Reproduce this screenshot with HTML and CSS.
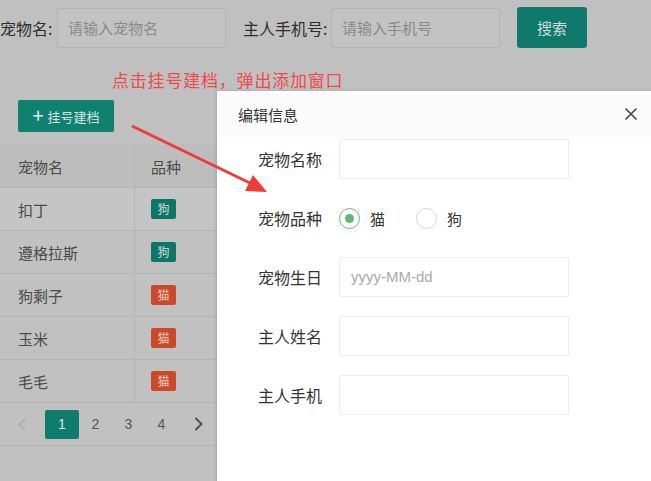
FILE: index.html
```html
<!DOCTYPE html>
<html lang="zh">
<head>
<meta charset="utf-8">
<link rel="stylesheet" href="styles.css">
</head>
<body>
<div class="page">
  <div class="search">
    <span class="lbl lbl-name">宠物名:</span>
    <div class="inp">请输入宠物名</div>
    <span class="lbl lbl-phone">主人手机号:</span>
    <div class="inp">请输入手机号</div>
    <button class="btn-search">搜索</button>
  </div>
  <div class="note">点击挂号建档，弹出添加窗口</div>
  <div class="toolbar"><button class="btn-add"><span class="plus">+</span>挂号建档</button></div>
  <div class="table">
    <div class="tr th"><div class="c1">宠物名</div><div class="c2">品种</div></div>
    <div class="tr hl"><div class="c1">扣丁</div><div class="c2"><span class="tag dog">狗</span></div></div>
    <div class="tr"><div class="c1">遵格拉斯</div><div class="c2"><span class="tag dog">狗</span></div></div>
    <div class="tr"><div class="c1">狗剩子</div><div class="c2"><span class="tag cat">猫</span></div></div>
    <div class="tr"><div class="c1">玉米</div><div class="c2"><span class="tag cat">猫</span></div></div>
    <div class="tr"><div class="c1">毛毛</div><div class="c2"><span class="tag cat">猫</span></div></div>
  </div>
  <div class="pager">
    <span class="pg prev"><svg width="8" height="13" viewBox="0 0 8 13"><path d="M7 1 L1.5 6.5 L7 12" stroke="#a9a9a9" stroke-width="1.4" fill="none"/></svg></span>
    <span class="pg cur">1</span>
    <span class="pg">2</span>
    <span class="pg">3</span>
    <span class="pg">4</span>
    <span class="pg next"><svg width="9" height="14" viewBox="0 0 9 14"><path d="M1.5 1 L7.5 7 L1.5 13" stroke="#4a4a4a" stroke-width="1.8" fill="none"/></svg></span>
  </div>
</div>

<div class="dialog">
  <div class="dlg-head">
    <span class="dlg-title">编辑信息</span>
    <svg class="close" width="14" height="14" viewBox="0 0 14 14"><path d="M1.5 1.5 L12.5 12.5 M12.5 1.5 L1.5 12.5" stroke="#444" stroke-width="1.6" fill="none"/></svg>
  </div>
  <div class="form">
    <div class="row"><span class="flbl">宠物名称</span><div class="finp"></div></div>
    <div class="row">
      <span class="flbl">宠物品种</span>
      <span class="radio on"></span><span class="rtxt">猫</span>
      <span class="radio"></span><span class="rtxt">狗</span>
    </div>
    <div class="row"><span class="flbl">宠物生日</span><div class="finp ph">yyyy-MM-dd</div></div>
    <div class="row"><span class="flbl">主人姓名</span><div class="finp"></div></div>
    <div class="row"><span class="flbl">主人手机</span><div class="finp"></div></div>
  </div>
</div>

<svg class="arrow" width="651" height="481" viewBox="0 0 651 481">
  <line x1="132" y1="126" x2="252" y2="184" stroke="#ef3b3b" stroke-width="3"/>
  <polygon points="267,192 245,191 253,175" fill="#ef3b3b"/>
</svg>
</body>
</html>
```
FILE: styles.css
```css
* { box-sizing: border-box; }
html, body {
  margin: 0;
  padding: 0;
  width: 651px;
  height: 481px;
  overflow: hidden;
  background: #bfbfbf;
  font-family: "Noto Sans CJK SC", "Noto Sans", sans-serif;
}
.page {
  width: 651px;
  height: 481px;
  background: #c0c0c0;
}
.search {
  display: flex;
  align-items: center;
  padding-top: 8px;
  height: 48px;
}
.lbl {
  font-size: 16px;
  color: #2e2e2e;
  white-space: nowrap;
}
.lbl-name { width: 57px; padding-left: 0; }
.lbl-phone { width: 88px; margin-left: 17px; }
.inp {
  width: 169px;
  height: 40px;
  border: 1px solid #b4b4b4;
  background: #c3c3c3;
  border-radius: 2px;
  font-size: 15px;
  color: #8a8a8a;
  line-height: 38px;
  padding-left: 10px;
}
.btn-search {
  margin-left: 17px;
  width: 70px;
  height: 41px;
  border: none;
  border-radius: 3px;
  background: #0f7a6c;
  color: #c9dcd8;
  font-family: inherit;
  font-size: 15px;
  margin-top: -1px;
}
.note {
  height: 52px;
  padding-top: 20px;
  padding-left: 112px;
  font-size: 17px;
  line-height: 24px;
  color: #ef4a4a;
  letter-spacing: 0.8px;
}
.toolbar {
  height: 45px;
  padding-left: 18px;
}
.btn-add {
  width: 96px;
  height: 32px;
  border: none;
  border-radius: 2px;
  background: #10806f;
  color: #d6e6e2;
  font-family: inherit;
  font-size: 13px;
  padding: 0;
  display: flex;
  align-items: center;
  justify-content: center;
}
.plus {
  font-size: 20px;
  line-height: 20px;
  margin-right: 4px;
  margin-top: -2px;
  color: #e4efec;
}
.table {
  width: 100%;
}
.tr {
  display: flex;
  height: 43px;
  border-bottom: 1px solid #b5b5b5;
  font-size: 15px;
  color: #4a4a4a;
  background: #c1c1c1;
}
.tr.th { background: #bdbdbd; }
.tr.hl { background: #c5c5c5; }
.c1 {
  width: 135px;
  padding-left: 18px;
  display: flex;
  align-items: center;
  border-right: 1px solid #b5b5b5;
}
.c2 {
  flex: 1;
  padding-left: 16px;
  display: flex;
  align-items: center;
}
.tag {
  display: inline-block;
  width: 25px;
  height: 20px;
  line-height: 20px;
  text-align: center;
  font-size: 12px;
  color: #cfded9;
  border-radius: 2px;
}
.tag.dog { background: #0d7767; }
.tag.cat { background: #c9492a; color: #f0c9bd; }
.pager {
  display: flex;
  align-items: center;
  height: 43px;
  padding-left: 7px;
  border-bottom: 1px solid #b5b5b5;
  background: #c1c1c1;
}
.pg {
  width: 33px;
  text-align: center;
  font-family: "Liberation Sans", sans-serif;
  font-size: 14px;
  color: #555;
}
.pg svg { display: block; margin: 0 auto; }
.pg.prev { width: 30px; margin-right: 8px; }
.pg.cur {
  width: 34px;
  height: 29px;
  line-height: 29px;
  background: #0f7d6d;
  color: #d8e8e4;
  border-radius: 2px;
}
.pg.next { width: 40px; }

.dialog {
  position: absolute;
  left: 217px;
  top: 91px;
  width: 440px;
  height: 400px;
  background: #fff;
  box-shadow: -1px 0 3px rgba(0,0,0,0.15);
}
.dlg-head {
  height: 46px;
  display: flex;
  align-items: center;
  justify-content: space-between;
  padding-left: 21px;
  padding-right: 19px;
  background: #fbfbfb;
}
.dlg-title {
  font-size: 15px;
  color: #333;
}
.close { margin-top: -1px; }
.form {
  padding-top: 2px;
  padding-left: 41px;
  display: flex;
  flex-direction: column;
  gap: 19px;
}
.row {
  display: flex;
  align-items: center;
  height: 40px;
}
.flbl {
  width: 81px;
  font-size: 16px;
  color: #333;
}
.finp {
  width: 230px;
  height: 40px;
  border: 1px solid #ececec;
  border-radius: 2px;
  font-family: "Liberation Sans", sans-serif;
  font-size: 15px;
  line-height: 38px;
  padding-left: 11px;
  color: #aaa;
}
.radio {
  width: 21px;
  height: 21px;
  border-radius: 50%;
  border: 1px solid #d4d4d4;
  margin-left: 0;
  position: relative;
}
.radio.on {
  border: 1.5px solid #5fb878;
}
.radio.on::after {
  content: "";
  position: absolute;
  left: 50%;
  top: 50%;
  width: 9px;
  height: 9px;
  margin: -4.5px 0 0 -4.5px;
  border-radius: 50%;
  background: #5fb878;
}
.rtxt {
  font-size: 15px;
  color: #333;
  margin-left: 10px;
  margin-right: 31px;
}
.arrow {
  position: absolute;
  left: 0;
  top: 0;
  pointer-events: none;
}
```
